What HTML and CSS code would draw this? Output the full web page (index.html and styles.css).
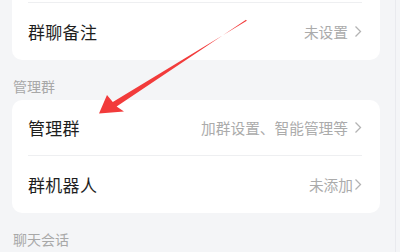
FILE: index.html
```html
<!DOCTYPE html>
<html>
<head>
<meta charset="utf-8">
<link rel="stylesheet" href="styles.css">
</head>
<body>
<div class="page">
  <div class="card card-top">
    <div class="row"></div>
    <div class="row last"><span class="title">群聊备注</span><span class="value">未设置<svg class="chev" viewBox="0 0 8 13"><path d="M1.5 1.5 L6.5 6.5 L1.5 11.5"/></svg></span></div>
  </div>
  <div class="label">管理群</div>
  <div class="card">
    <div class="row"><span class="title">管理群</span><span class="value">加群设置、智能管理等<svg class="chev" viewBox="0 0 8 13"><path d="M1.5 1.5 L6.5 6.5 L1.5 11.5"/></svg></span></div>
    <div class="row last"><span class="title">群机器人</span><span class="value">未添加<svg class="chev tight" viewBox="0 0 8 13"><path d="M1.5 1.5 L6.5 6.5 L1.5 11.5"/></svg></span></div>
  </div>
  <div class="label">聊天会话</div>
</div>
<svg class="arrow" width="400" height="252" viewBox="0 0 400 252">
  <polygon points="99,113.5 107,95 112.8,102 246.8,20.8 246,19.8 116.6,106.6 124,111.5" />
</svg>
</body>
</html>
```
FILE: styles.css
```css
html, body {
  margin: 0;
  padding: 0;
}
body {
  width: 400px;
  height: 252px;
  overflow: hidden;
  background: #f4f5f7;
  font-family: "Noto Sans CJK SC", "Noto Sans", sans-serif;
  position: relative;
}
.page {
  width: 395px;
  height: 252px;
  border-right: 1px solid #e9eaee;
  overflow: hidden;
}
.card {
  background: #ffffff;
  border-radius: 10px;
  margin: 0 15px 0 12px;
}
.card-top {
  margin-top: -53px;
}
.row {
  height: 56px;
  margin: 0 18px 0 16px;
  border-bottom: 1px solid #eeeff1;
  display: flex;
  align-items: center;
  justify-content: space-between;
  box-sizing: border-box;
}
.row.last {
  border-bottom: none;
  height: 57px;
}
.title {
  font-size: 17px;
  color: #1e1e1e;
  letter-spacing: 0.3px;
}
.value {
  font-size: 14.7px;
  color: #ababab;
  display: flex;
  align-items: center;
}
.chev {
  width: 8px;
  height: 13px;
  margin-left: 6px;
  fill: none;
  stroke: #b3b3b3;
  stroke-width: 1.3;
}
.chev.tight {
  margin-left: 1px;
}
.label {
  padding: 16px 13px 4px;
  height: 20px;
  line-height: 20px;
  font-size: 14px;
  color: #a8a8a8;
}
.arrow {
  position: absolute;
  left: 0;
  top: 0;
}
.arrow polygon {
  fill: #f23b3b;
}
```
